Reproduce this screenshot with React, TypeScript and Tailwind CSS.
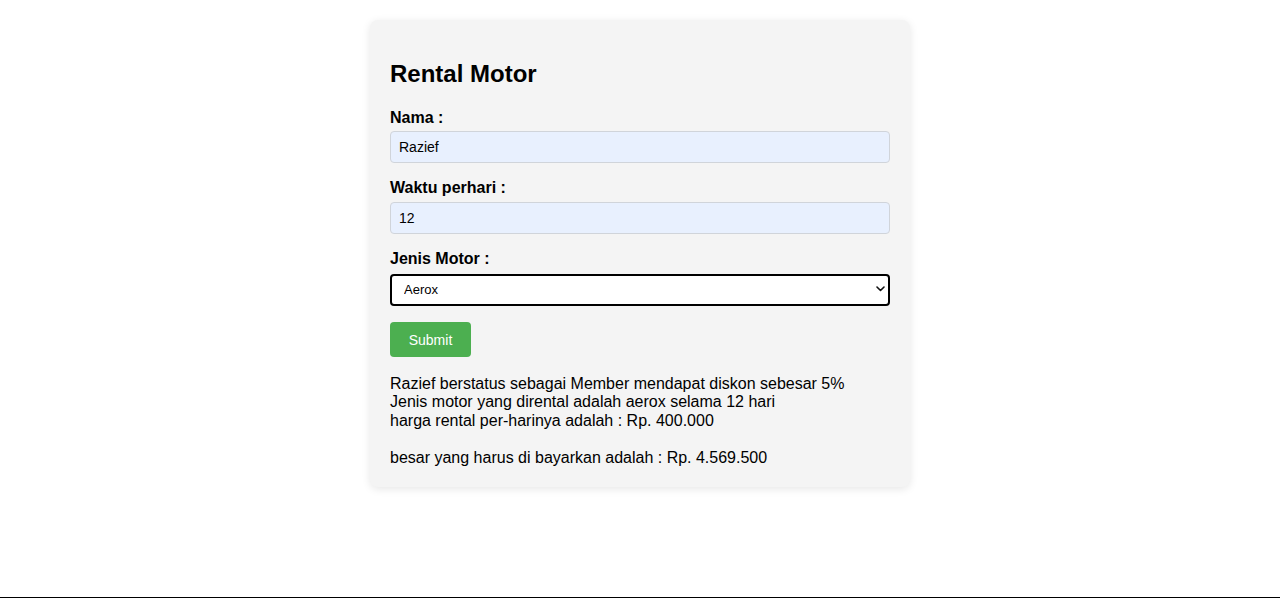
import React from "react";

const App: React.FC = () => {
  return (
    <div
      className="h-[598px] bg-white border-b border-black text-black"
      style={{ fontFamily: '"Liberation Sans", Arial, sans-serif' }}
    >
      <div className="pt-5">
        <div className="mx-auto w-[540px] bg-[#f4f4f4] rounded-lg p-5 shadow-[0_2px_8px_rgba(0,0,0,0.1)]">
          <h2 className="text-2xl font-bold leading-[28px] mt-5 mb-[21px]">Rental Motor</h2>

          <label className="block font-bold text-base leading-[18px] mb-1">Nama :</label>
          <input
            type="text"
            defaultValue="Razief"
            className="block w-full h-8 px-2 mb-4 text-sm text-black bg-[#e8f0fe] border border-[#d0d4da] rounded"
          />

          <label className="block font-bold text-base leading-[18px] mb-[5px]">Waktu perhari :</label>
          <input
            type="text"
            defaultValue="12"
            className="block w-full h-8 px-2 mb-4 text-sm text-black bg-[#e8f0fe] border border-[#d0d4da] rounded"
          />

          <label className="block font-bold text-base leading-[18px] mb-[6px]">Jenis Motor :</label>
          <div className="relative mb-4">
            <select
              defaultValue="aerox"
              className="block w-full h-8 pl-3 pr-8 text-[13px] text-black bg-white border-2 border-black rounded appearance-none"
            >
              <option value="aerox">Aerox</option>
              <option value="nmax">Nmax</option>
              <option value="vario">Vario</option>
            </select>
            <svg
              className="absolute right-[5px] top-[12px] pointer-events-none"
              width="9"
              height="6"
              viewBox="0 0 9 6"
              fill="none"
            >
              <path d="M1 1l3.5 3.5L8 1" stroke="#111" strokeWidth="1.6" strokeLinecap="round" strokeLinejoin="round" />
            </svg>
          </div>

          <button className="block h-[35px] w-[81px] bg-[#4caf50] text-white text-sm rounded">Submit</button>

          <div className="mt-[18px] text-base leading-[18.4px]">
            Razief berstatus sebagai Member mendapat diskon sebesar 5%
            <br />
            Jenis motor yang dirental adalah aerox selama 12 hari
            <br />
            harga rental per-harinya adalah : Rp. 400.000
            <br />
            <br />
            besar yang harus di bayarkan adalah : Rp. 4.569.500
          </div>
        </div>
      </div>
    </div>
  );
};

export default App;
